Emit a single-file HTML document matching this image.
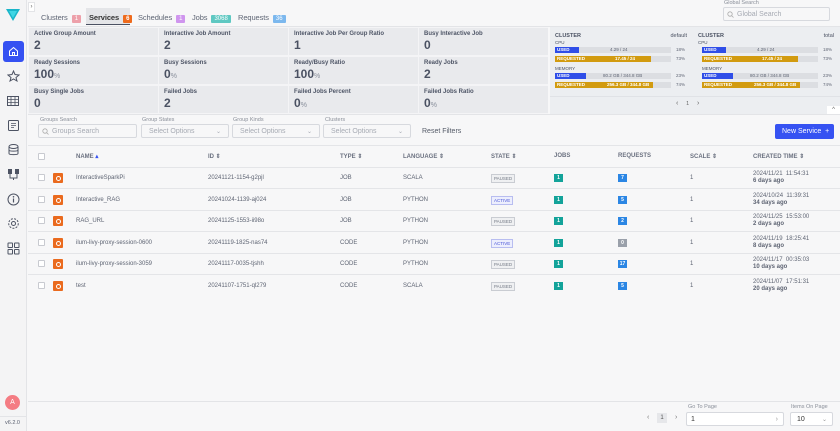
<!DOCTYPE html><html><head><style>
*{box-sizing:border-box;margin:0;padding:0}
body{width:840px;height:431px;overflow:hidden;background:#f7f7f8;font-family:"Liberation Sans",sans-serif;color:#4b5263;position:relative}
.a{position:absolute}
.side{left:0;top:0;width:27px;height:431px;background:#f4f4f5;border-right:1px solid #e3e4e7}
.tab{top:13px;font-size:7.5px;color:#5f6675;letter-spacing:-0.1px}
.bd{display:inline-block;padding:1px 3px;font-size:6px;color:#fff;margin-left:4px;border-radius:1px;letter-spacing:0}
.cell{background:#e9eaed;width:129px;height:27px}
.cl{font-size:6px;color:#4e5566;font-weight:bold;position:absolute;left:5px;top:3px}
.cv{font-size:12px;color:#4a5162;font-weight:bold;position:absolute;left:5px;top:10px}
.cv small{font-size:7px;color:#8a909c;font-weight:normal}
.lbl{font-size:5.5px;color:#8a8f99}
.inp{height:14px;border:1px solid #d7d9de;background:#f7f7f8;border-radius:2px;font-size:7px;color:#a6aab3;padding:3px 0 0 13px}
.th{top:153px;font-size:6px;font-weight:bold;color:#6b7180}
.row{left:28px;width:812px;height:1px;background:#e4e5e8}
.t{font-size:6px;color:#5e6473}
.cb{width:7px;height:7px;border:1px solid #c8cad0;background:#fff;border-radius:1px}
.ic{width:10px;height:10px;background:#ea6a1e;border-radius:1px}
.ic:after{content:"";position:absolute;left:2.5px;top:2.5px;width:3px;height:3px;border:1px solid #fff;border-radius:50%}
.st{font-size:4.5px;border:1px solid #c9ccd2;background:#eff0f2;color:#737985;padding:1px 2px}
.st.ac{border-color:#b8bdf0;background:#eceefd;color:#4a56d6}
.nb{width:9px;height:8px;font-size:5px;color:#fff;text-align:center;line-height:8px;font-weight:bold}
.bar{height:6px;font-size:4.5px;line-height:6px;color:#fff;font-weight:bold;padding-left:2px}
</style></head><body>
<div class="a side"></div>
<svg class="a" style="left:6px;top:9px" width="14" height="12" viewBox="0 0 14 12"><path d="M0 0H14L7 12Z" fill="#19b5c9"/><path d="M3 2H11L7 9Z" fill="#3fd6e4"/></svg>
<div class="a" style="left:3px;top:41px;width:21px;height:21px;background:#3551f2;border-radius:3px"></div>
<svg class="a" style="left:8px;top:46px" width="11" height="11" viewBox="0 0 11 11"><path d="M1.5 5L5.5 1.5L9.5 5V9.5H1.5Z" fill="none" stroke="#fff" stroke-width="1"/><path d="M4.5 9.5V6.5H6.5V9.5" fill="none" stroke="#fff"/></svg>
<svg class="a" style="left:7px;top:70px" width="13" height="12" viewBox="0 0 13 12"><path d="M6.5 1L8 4.5L12 5L9 7.5L10 11L6.5 9L3 11L4 7.5L1 5L5 4.5Z" fill="none" stroke="#4d5363" stroke-width="1"/></svg>
<svg class="a" style="left:7px;top:96px" width="12" height="10" viewBox="0 0 12 10"><rect x=".5" y=".5" width="11" height="9" fill="none" stroke="#4d5363"/><path d="M.5 3.5H11.5M.5 6.5H11.5M4 .5V9.5M8 .5V9.5" stroke="#4d5363" stroke-width=".8"/></svg>
<svg class="a" style="left:8px;top:120px" width="11" height="11" viewBox="0 0 11 11"><rect x=".5" y=".5" width="10" height="10" rx="1" fill="none" stroke="#4d5363"/><path d="M3 3.5H8M3 5.5H8M3 7.5H6" stroke="#4d5363" stroke-width=".8"/></svg>
<svg class="a" style="left:8px;top:144px" width="11" height="12" viewBox="0 0 11 12"><ellipse cx="5.5" cy="2.5" rx="4.5" ry="2" fill="none" stroke="#4d5363"/><path d="M1 2.5V9.5C1 11 10 11 10 9.5V2.5M1 6C1 7.5 10 7.5 10 6" fill="none" stroke="#4d5363"/></svg>
<svg class="a" style="left:7px;top:168px" width="13" height="13" viewBox="0 0 13 13"><rect x="1" y="1" width="4" height="5" fill="#4d5363"/><rect x="8" y="1" width="4" height="5" fill="#4d5363"/><path d="M3 6V10H10V6M6.5 10V12" stroke="#4d5363" fill="none"/></svg>
<svg class="a" style="left:7px;top:193px" width="13" height="13" viewBox="0 0 13 13"><circle cx="6.5" cy="6.5" r="5.5" fill="none" stroke="#4d5363"/><path d="M6.5 5.5V9.5" stroke="#4d5363" stroke-width="1.2"/><circle cx="6.5" cy="3.8" r=".8" fill="#4d5363"/></svg>
<svg class="a" style="left:7px;top:217px" width="13" height="13" viewBox="0 0 13 13"><circle cx="6.5" cy="6.5" r="2" fill="none" stroke="#4d5363"/><circle cx="6.5" cy="6.5" r="4.8" fill="none" stroke="#4d5363" stroke-dasharray="2 1.3"/></svg>
<svg class="a" style="left:7px;top:242px" width="13" height="13" viewBox="0 0 13 13"><rect x="1" y="1" width="4.5" height="4.5" rx=".5" fill="none" stroke="#4d5363"/><rect x="7.5" y="1" width="4.5" height="4.5" rx=".5" fill="none" stroke="#4d5363"/><rect x="1" y="7.5" width="4.5" height="4.5" rx=".5" fill="none" stroke="#4d5363"/><rect x="7.5" y="7.5" width="4.5" height="4.5" rx=".5" fill="none" stroke="#4d5363"/></svg>
<div class="a" style="left:5px;top:395px;width:15px;height:15px;border-radius:50%;background:#f47c83;color:#fff;font-size:7px;text-align:center;line-height:15px">A</div>
<div class="a" style="left:0;top:416px;width:27px;height:1px;background:#e3e4e7"></div>
<div class="a" style="left:5px;top:420px;font-size:5.5px;color:#5a6070">v6.2.0</div>
<div class="a" style="left:28px;top:2px;width:7px;height:10px;background:#fff;border:1px solid #e3e4e7;font-size:6px;line-height:8px;color:#666;text-align:center">›</div>

<div class="a tab" style="left:41px">Clusters<span class="bd" style="background:#eda0aa">1</span></div>
<div class="a" style="left:86px;top:8px;width:44px;height:17px;background:#e4e5e8;border-bottom:1.5px solid #4b5263"></div>
<div class="a tab" style="left:89px;color:#333;font-weight:bold">Services<span class="bd" style="background:#ee6a1c">6</span></div>
<div class="a tab" style="left:138px">Schedules<span class="bd" style="background:#cf95ee">1</span></div>
<div class="a tab" style="left:192px">Jobs<span class="bd" style="background:#5fc8c2">3068</span></div>
<div class="a tab" style="left:238px">Requests<span class="bd" style="background:#7cb8ee">36</span></div>
<div class="a" style="left:724px;top:0;font-size:5.5px;color:#8a8f99">Global Search</div>
<div class="a inp" style="left:723px;top:7px;width:107px;height:14px;background:#f7f7f8">Global Search</div>
<svg class="a" style="left:727px;top:11px" width="7" height="7"><circle cx="3" cy="3" r="2.2" fill="none" stroke="#aaa" stroke-width=".8"/><path d="M4.6 4.6L6.5 6.5" stroke="#aaa" stroke-width=".8"/></svg>
<div class="a" style="left:28px;top:26px;width:812px;height:1px;background:#e3e4e7"></div>
<div class="a" style="left:28px;top:27px;width:520px;height:87px;background:#f4f4f6"></div>

<div class="a cell" style="left:29px;top:28px"><div class="cl">Active Group Amount</div><div class="cv">2</div></div>
<div class="a cell" style="left:159px;top:28px"><div class="cl">Interactive Job Amount</div><div class="cv">2</div></div>
<div class="a cell" style="left:289px;top:28px"><div class="cl">Interactive Job Per Group Ratio</div><div class="cv">1</div></div>
<div class="a cell" style="left:419px;top:28px"><div class="cl">Busy Interactive Job</div><div class="cv">0</div></div>
<div class="a cell" style="left:29px;top:57px"><div class="cl">Ready Sessions</div><div class="cv">100<small>%</small></div></div>
<div class="a cell" style="left:159px;top:57px"><div class="cl">Busy Sessions</div><div class="cv">0<small>%</small></div></div>
<div class="a cell" style="left:289px;top:57px"><div class="cl">Ready/Busy Ratio</div><div class="cv">100<small>%</small></div></div>
<div class="a cell" style="left:419px;top:57px"><div class="cl">Ready Jobs</div><div class="cv">2</div></div>
<div class="a cell" style="left:29px;top:86px"><div class="cl">Busy Single Jobs</div><div class="cv">0</div></div>
<div class="a cell" style="left:159px;top:86px"><div class="cl">Failed Jobs</div><div class="cv">2</div></div>
<div class="a cell" style="left:289px;top:86px"><div class="cl">Failed Jobs Percent</div><div class="cv">0<small>%</small></div></div>
<div class="a cell" style="left:419px;top:86px"><div class="cl">Failed Jobs Ratio</div><div class="cv">0<small>%</small></div></div>

<div class="a" style="left:550px;top:27px;width:290px;height:87px;background:#eceef1"></div>
<div class="a" style="left:550px;top:96px;width:290px;height:1px;background:#e0e2e6"></div>
<div class="a" style="left:676px;top:100px;font-size:7px;color:#666">‹ &nbsp;&nbsp;&nbsp;<span style="font-size:5.5px">1</span>&nbsp;&nbsp;&nbsp; ›</div>
<div class="a" style="left:827px;top:106px;width:13px;height:8px;background:#fff;font-size:6px;text-align:center;line-height:9px;color:#666">^</div>

<div class="a" style="left:555px;top:33px;width:132px">
 <div style="font-size:5.5px;font-weight:bold;display:flex;justify-content:space-between"><span>CLUSTER</span><span style="font-weight:normal">default</span></div>
 <div style="font-size:4.5px;margin-top:1px">CPU</div>
</div>
<div class="a" style="left:698px;top:33px;width:136px">
 <div style="font-size:5.5px;font-weight:bold;display:flex;justify-content:space-between"><span>CLUSTER</span><span style="font-weight:normal">total</span></div>
 <div style="font-size:4.5px;margin-top:1px">CPU</div>
</div>
<div class="a" style="left:555px;top:47px;width:116px;height:6px;background:#dcdee2"></div>
<div class="a bar" style="left:555px;top:47px;width:24px;background:#2f4ee8">USED</div>
<div class="a t" style="left:610px;top:47px;font-size:4.5px">4.29 / 24</div><div class="a t" style="left:676px;top:47px;font-size:4.5px">18%</div>
<div class="a" style="left:555px;top:56px;width:116px;height:6px;background:#dcdee2"></div>
<div class="a bar" style="left:555px;top:56px;width:96px;background:#d29b10">REQUESTED<span style="margin-left:30px">17.45 / 24</span></div>
<div class="a t" style="left:676px;top:56px;font-size:4.5px">73%</div>
<div class="a" style="left:555px;top:66px;font-size:4.5px">MEMORY</div>
<div class="a" style="left:555px;top:73px;width:116px;height:6px;background:#dcdee2"></div>
<div class="a bar" style="left:555px;top:73px;width:31px;background:#2f4ee8">USED</div>
<div class="a t" style="left:603px;top:73px;font-size:4.5px">80.2 GB / 344.8 GB</div><div class="a t" style="left:676px;top:73px;font-size:4.5px">23%</div>
<div class="a" style="left:555px;top:82px;width:116px;height:6px;background:#dcdee2"></div>
<div class="a bar" style="left:555px;top:82px;width:98px;background:#d29b10">REQUESTED<span style="margin-left:22px">256.3 GB / 344.8 GB</span></div>
<div class="a t" style="left:676px;top:82px;font-size:4.5px">74%</div>
<div class="a" style="left:702px;top:47px;width:116px;height:6px;background:#dcdee2"></div>
<div class="a bar" style="left:702px;top:47px;width:24px;background:#2f4ee8">USED</div>
<div class="a t" style="left:757px;top:47px;font-size:4.5px">4.29 / 24</div><div class="a t" style="left:823px;top:47px;font-size:4.5px">18%</div>
<div class="a" style="left:702px;top:56px;width:116px;height:6px;background:#dcdee2"></div>
<div class="a bar" style="left:702px;top:56px;width:96px;background:#d29b10">REQUESTED<span style="margin-left:30px">17.45 / 24</span></div>
<div class="a t" style="left:823px;top:56px;font-size:4.5px">73%</div>
<div class="a" style="left:702px;top:66px;font-size:4.5px">MEMORY</div>
<div class="a" style="left:702px;top:73px;width:116px;height:6px;background:#dcdee2"></div>
<div class="a bar" style="left:702px;top:73px;width:31px;background:#2f4ee8">USED</div>
<div class="a t" style="left:750px;top:73px;font-size:4.5px">80.2 GB / 344.8 GB</div><div class="a t" style="left:823px;top:73px;font-size:4.5px">23%</div>
<div class="a" style="left:702px;top:82px;width:116px;height:6px;background:#dcdee2"></div>
<div class="a bar" style="left:702px;top:82px;width:98px;background:#d29b10">REQUESTED<span style="margin-left:22px">256.3 GB / 344.8 GB</span></div>
<div class="a t" style="left:823px;top:82px;font-size:4.5px">74%</div>

<div class="a" style="left:28px;top:114px;width:812px;height:1px;background:#e3e4e7"></div>
<div class="a lbl" style="left:40px;top:117px">Groups Search</div>
<div class="a lbl" style="left:142px;top:117px">Group States</div>
<div class="a lbl" style="left:233px;top:117px">Group Kinds</div>
<div class="a lbl" style="left:325px;top:117px">Clusters</div>
<div class="a inp" style="left:38px;top:124px;width:99px">Groups Search</div>
<svg class="a" style="left:42px;top:128px" width="7" height="7"><circle cx="3" cy="3" r="2.2" fill="none" stroke="#aaa" stroke-width=".8"/><path d="M4.6 4.6L6.5 6.5" stroke="#aaa" stroke-width=".8"/></svg>
<div class="a inp" style="left:141px;top:124px;width:88px;padding-left:7px">Select Options<span style="position:absolute;right:7px;font-size:6px">⌄</span></div>
<div class="a inp" style="left:232px;top:124px;width:88px;padding-left:7px">Select Options<span style="position:absolute;right:7px;font-size:6px">⌄</span></div>
<div class="a inp" style="left:323px;top:124px;width:88px;padding-left:7px">Select Options<span style="position:absolute;right:7px;font-size:6px">⌄</span></div>
<div class="a" style="left:422px;top:128px;font-size:7px;color:#555b68">Reset Filters</div>
<div class="a" style="left:775px;top:124px;width:59px;height:15px;background:#3652f2;border-radius:2px;color:#fff;font-size:7px;line-height:15px;padding-left:7px">New Service &nbsp;+</div>

<div class="a row" style="top:145px"></div>
<div class="a cb" style="left:38px;top:153px"></div>
<div class="a th" style="left:76px">NAME <span style="color:#3652f2">▴</span></div>
<div class="a th" style="left:208px">ID ⇕</div>
<div class="a th" style="left:340px">TYPE ⇕</div>
<div class="a th" style="left:403px">LANGUAGE ⇕</div>
<div class="a th" style="left:491px">STATE ⇕</div>
<div class="a th" style="left:554px">JOBS</div>
<div class="a th" style="left:618px">REQUESTS</div>
<div class="a th" style="left:690px">SCALE ⇕</div>
<div class="a th" style="left:753px">CREATED TIME ⇕</div>
<div class="a row" style="top:167px"></div>
<div class="a row" style="top:188px"></div><div class="a row" style="top:210px"></div><div class="a row" style="top:231px"></div><div class="a row" style="top:253px"></div><div class="a row" style="top:274px"></div>

<div class="a cb" style="left:38px;top:174px"></div><div class="a ic" style="left:53px;top:173px"></div>
<div class="a t" style="left:76px;top:175px">InteractiveSparkPi</div><div class="a t" style="left:208px;top:175px">20241121-1154-g2pjl</div><div class="a t" style="left:340px;top:175px">JOB</div><div class="a t" style="left:403px;top:175px">SCALA</div>
<div class="a st" style="left:491px;top:174px">PAUSED</div><div class="a nb" style="left:554px;top:174px;background:#13a39a">1</div><div class="a nb" style="left:618px;top:174px;background:#2b86e4">7</div><div class="a t" style="left:690px;top:175px">1</div>
<div class="a t" style="left:753px;top:171px">2024/11/21&nbsp;&nbsp;11:54:31</div><div class="a t" style="left:753px;top:178px;font-weight:bold">6 days ago</div>
<div class="a cb" style="left:38px;top:196px"></div><div class="a ic" style="left:53px;top:195px"></div>
<div class="a t" style="left:76px;top:197px">Interactive_RAG</div><div class="a t" style="left:208px;top:197px">20241024-1139-aj024</div><div class="a t" style="left:340px;top:197px">JOB</div><div class="a t" style="left:403px;top:197px">PYTHON</div>
<div class="a st ac" style="left:491px;top:196px">ACTIVE</div><div class="a nb" style="left:554px;top:196px;background:#13a39a">1</div><div class="a nb" style="left:618px;top:196px;background:#2b86e4">5</div><div class="a t" style="left:690px;top:197px">1</div>
<div class="a t" style="left:753px;top:193px">2024/10/24&nbsp;&nbsp;11:39:31</div><div class="a t" style="left:753px;top:200px;font-weight:bold">34 days ago</div>
<div class="a cb" style="left:38px;top:217px"></div><div class="a ic" style="left:53px;top:216px"></div>
<div class="a t" style="left:76px;top:218px">RAG_URL</div><div class="a t" style="left:208px;top:218px">20241125-1553-ii98o</div><div class="a t" style="left:340px;top:218px">JOB</div><div class="a t" style="left:403px;top:218px">PYTHON</div>
<div class="a st" style="left:491px;top:217px">PAUSED</div><div class="a nb" style="left:554px;top:217px;background:#13a39a">1</div><div class="a nb" style="left:618px;top:217px;background:#2b86e4">2</div><div class="a t" style="left:690px;top:218px">1</div>
<div class="a t" style="left:753px;top:214px">2024/11/25&nbsp;&nbsp;15:53:00</div><div class="a t" style="left:753px;top:221px;font-weight:bold">2 days ago</div>
<div class="a cb" style="left:38px;top:239px"></div><div class="a ic" style="left:53px;top:238px"></div>
<div class="a t" style="left:76px;top:240px">ilum-livy-proxy-session-0600</div><div class="a t" style="left:208px;top:240px">20241119-1825-nas74</div><div class="a t" style="left:340px;top:240px">CODE</div><div class="a t" style="left:403px;top:240px">PYTHON</div>
<div class="a st ac" style="left:491px;top:239px">ACTIVE</div><div class="a nb" style="left:554px;top:239px;background:#13a39a">1</div><div class="a nb" style="left:618px;top:239px;background:#9aa0aa">0</div><div class="a t" style="left:690px;top:240px">1</div>
<div class="a t" style="left:753px;top:236px">2024/11/19&nbsp;&nbsp;18:25:41</div><div class="a t" style="left:753px;top:243px;font-weight:bold">8 days ago</div>
<div class="a cb" style="left:38px;top:260px"></div><div class="a ic" style="left:53px;top:259px"></div>
<div class="a t" style="left:76px;top:261px">ilum-livy-proxy-session-3059</div><div class="a t" style="left:208px;top:261px">20241117-0035-tjshh</div><div class="a t" style="left:340px;top:261px">CODE</div><div class="a t" style="left:403px;top:261px">PYTHON</div>
<div class="a st" style="left:491px;top:260px">PAUSED</div><div class="a nb" style="left:554px;top:260px;background:#13a39a">1</div><div class="a nb" style="left:618px;top:260px;background:#2b86e4">17</div><div class="a t" style="left:690px;top:261px">1</div>
<div class="a t" style="left:753px;top:257px">2024/11/17&nbsp;&nbsp;00:35:03</div><div class="a t" style="left:753px;top:264px;font-weight:bold">10 days ago</div>
<div class="a cb" style="left:38px;top:282px"></div><div class="a ic" style="left:53px;top:281px"></div>
<div class="a t" style="left:76px;top:283px">test</div><div class="a t" style="left:208px;top:283px">20241107-1751-ql279</div><div class="a t" style="left:340px;top:283px">CODE</div><div class="a t" style="left:403px;top:283px">SCALA</div>
<div class="a st" style="left:491px;top:282px">PAUSED</div><div class="a nb" style="left:554px;top:282px;background:#13a39a">1</div><div class="a nb" style="left:618px;top:282px;background:#2b86e4">5</div><div class="a t" style="left:690px;top:283px">1</div>
<div class="a t" style="left:753px;top:279px">2024/11/07&nbsp;&nbsp;17:51:31</div><div class="a t" style="left:753px;top:286px;font-weight:bold">20 days ago</div>

<div class="a" style="left:28px;top:401px;width:812px;height:1px;background:#e3e4e7"></div>
<div class="a" style="left:647px;top:414px;font-size:7px;color:#777">‹</div>
<div class="a" style="left:657px;top:413px;width:10px;height:10px;background:#e6e7ea;font-size:6px;text-align:center;line-height:10px;color:#555">1</div>
<div class="a" style="left:675px;top:414px;font-size:7px;color:#777">›</div>
<div class="a lbl" style="left:688px;top:404px">Go To Page</div>
<div class="a inp" style="left:686px;top:412px;width:98px;height:14px;padding-left:4px;color:#333;background:#fff">1<span style="position:absolute;right:5px;color:#999">›</span></div>
<div class="a lbl" style="left:791px;top:404px">Items On Page</div>
<div class="a inp" style="left:790px;top:412px;width:43px;height:14px;padding-left:6px;color:#333;background:#fff">10<span style="position:absolute;right:5px;color:#999;font-size:6px">⌄</span></div>
</body></html>
